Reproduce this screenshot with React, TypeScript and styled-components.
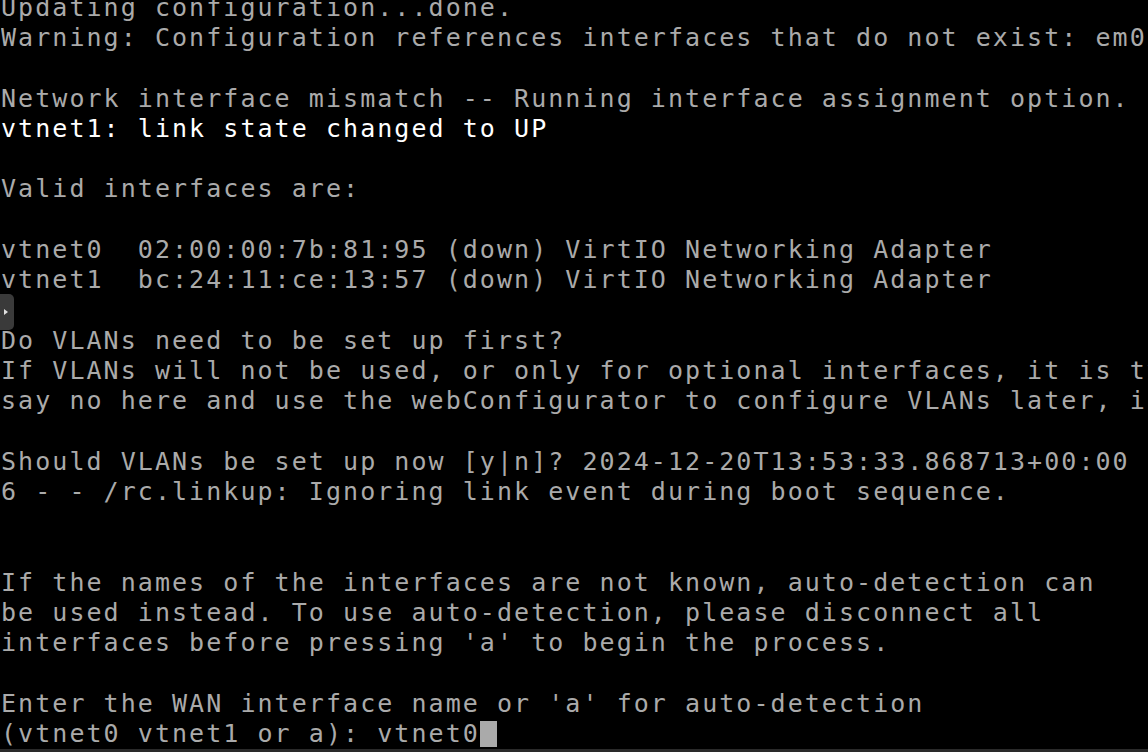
import React from "react";
import styled, { createGlobalStyle } from "styled-components";

const Global = createGlobalStyle`
  html, body { margin: 0; padding: 0; background: #000; }
  body { overflow: hidden; }
`;

const Screen = styled.div`
  position: relative;
  height: 752px;
  width: 1148px;
  background: #000;
  display: flex;
  flex-direction: column;
  justify-content: flex-end;
  overflow: hidden;
`;

const Terminal = styled.div`
  display: flex;
  flex-direction: column;
  font-family: "DejaVu Sans Mono", "Liberation Mono", monospace;
  font-size: 25px;
  letter-spacing: 2.05px;
  line-height: 30.25px;
  white-space: pre;
  color: #aaaaaa;
  padding-left: 1px;
`;

const Line = styled.div<{ $bright?: boolean }>`
  height: 30.25px;
  color: ${(p) => (p.$bright ? "#ffffff" : "#aaaaaa")};
  overflow: hidden;
`;

const Cursor = styled.span`
  display: inline-block;
  width: 17px;
  height: 26px;
  vertical-align: -5px;
  background: #aaaaaa;
`;

const StatusStrip = styled.div`
  height: 3px;
  flex-shrink: 0;
  background: #2a2a2a;
`;

const SideTab = styled.div`
  position: absolute;
  left: 0;
  top: 294px;
  width: 14px;
  height: 36px;
  background: #3a3a3a;
  border-radius: 0 5px 5px 0;
  display: flex;
  align-items: center;
  justify-content: center;
`;

const Arrow = styled.div`
  width: 0;
  height: 0;
  border-top: 3px solid transparent;
  border-bottom: 3px solid transparent;
  border-left: 4px solid #e0e0e0;
  margin-left: -3px;
`;

const lines: { t: string; b?: boolean }[] = [
  { t: "Updating configuration...done." },
  { t: "Warning: Configuration references interfaces that do not exist: em0" },
  { t: "" },
  { t: "Network interface mismatch -- Running interface assignment option." },
  { t: "vtnet1: link state changed to UP", b: true },
  { t: "" },
  { t: "Valid interfaces are:" },
  { t: "" },
  { t: "vtnet0  02:00:00:7b:81:95 (down) VirtIO Networking Adapter" },
  { t: "vtnet1  bc:24:11:ce:13:57 (down) VirtIO Networking Adapter" },
  { t: "" },
  { t: "Do VLANs need to be set up first?" },
  { t: "If VLANs will not be used, or only for optional interfaces, it is typical to" },
  { t: "say no here and use the webConfigurator to configure VLANs later, if required." },
  { t: "" },
  { t: "Should VLANs be set up now [y|n]? 2024-12-20T13:53:33.868713+00:00 - php-cgi" },
  { t: "6 - - /rc.linkup: Ignoring link event during boot sequence." },
  { t: "" },
  { t: "" },
  { t: "If the names of the interfaces are not known, auto-detection can" },
  { t: "be used instead. To use auto-detection, please disconnect all" },
  { t: "interfaces before pressing 'a' to begin the process." },
  { t: "" },
  { t: "Enter the WAN interface name or 'a' for auto-detection" },
];

export default function App() {
  return (
    <>
      <Global />
      <Screen>
        <Terminal>
          {lines.map((l, i) => (
            <Line key={i} $bright={l.b}>
              {l.t || " "}
            </Line>
          ))}
          <Line>
            {"(vtnet0 vtnet1 or a): vtnet0"}
            <Cursor />
          </Line>
        </Terminal>
        <StatusStrip />
        <SideTab>
          <Arrow />
        </SideTab>
      </Screen>
    </>
  );
}
